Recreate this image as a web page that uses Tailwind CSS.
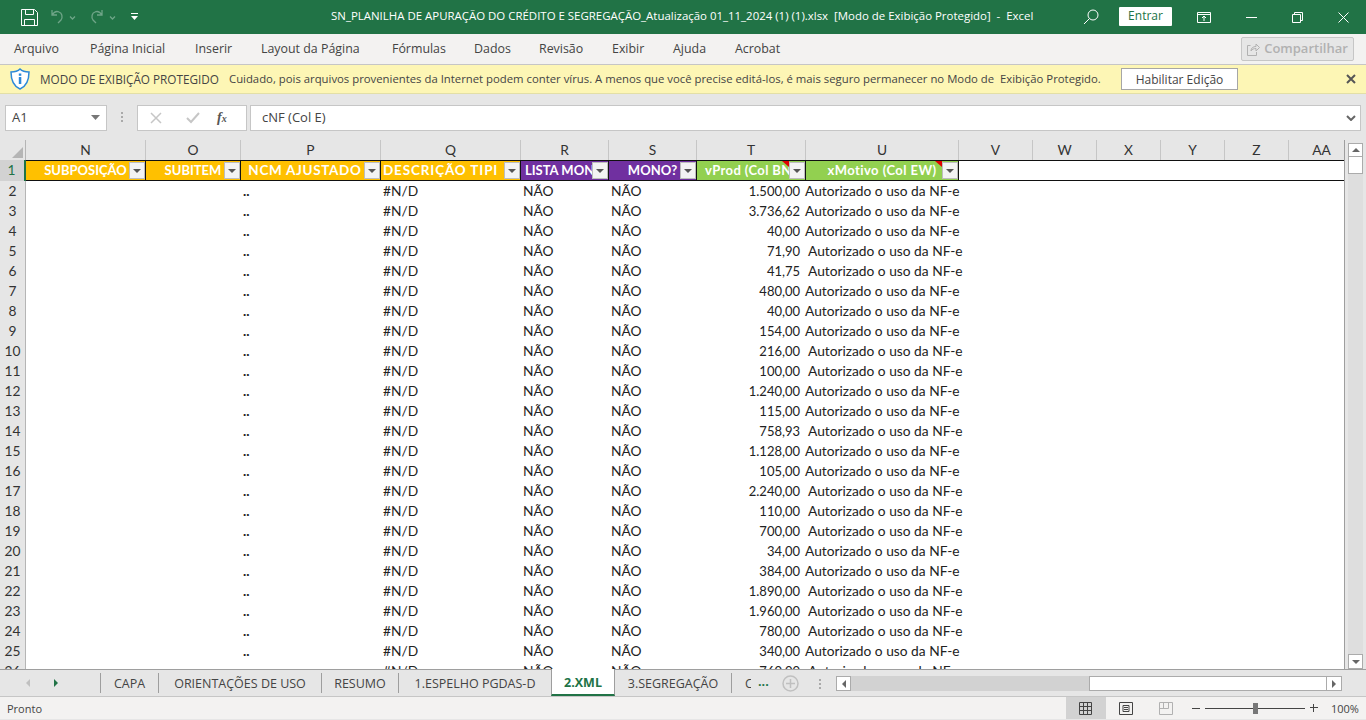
<!DOCTYPE html>
<html lang="pt-BR">
<head>
    <meta charset="UTF-8">
    <title>Excel - Modo de Exibição Protegido</title>
    <script src="https://cdn.jsdelivr.net/npm/@tailwindcss/browser@4"></script>
</head>
<body class="h-[720px] w-[1366px] overflow-hidden flex flex-col bg-[#e6e6e6] font-['Open_Sans','Noto_Sans',sans-serif] text-[#444]">

<!-- Title bar -->
<header class="h-[34px] shrink-0 bg-[#217346] text-white flex items-center text-[11.45px] relative">
    <div class="flex items-center pl-[21px] gap-[12px] w-[200px]">
        <svg width="17" height="17" viewBox="0 0 17 17" fill="none" stroke="white" stroke-width="1"><path d="M.5.5h13l3 3v13H.5zM4.5.5v5h8v-5M3.5 16.5v-6h10v6"/></svg>
        <svg width="28" height="16" viewBox="0 0 28 16" fill="none" stroke="#6fa588" stroke-width="1.3"><path d="M2 1v5h5M2 6c2-3 5-4 7-3 3 1 4 5 2 8l-3 3M20 7.500l2.500 2.500L25 7.500" /></svg>
        <svg width="28" height="16" viewBox="0 0 28 16" fill="none" stroke="#6fa588" stroke-width="1.3"><path d="M12 1v5H7M12 6c-2-3-5-4-7-3-3 1-4 5-2 8l3 3M20 7.500l2.500 2.500L25 7.500"/></svg>
        <svg width="9" height="8" viewBox="0 0 9 8" fill="white"><path d="M1 0h7v1H1zM1 3h7L4.500 7z"/></svg>
    </div>
    <span class="absolute left-[331px] top-[7px] whitespace-nowrap">SN_PLANILHA DE APURAÇÃO DO CRÉDITO E SEGREGAÇÃO_Atualização 01_11_2024 (1) (1).xlsx&nbsp; [Modo de Exibição Protegido]&nbsp; -&nbsp; Excel</span>
    <div class="ml-auto flex items-center">
        <svg class="mr-[20px]" width="16" height="16" viewBox="0 0 16 16" fill="none" stroke="white"><circle cx="10" cy="6" r="5"/><path d="M6.500 9.500L1 15"/></svg>
        <button class="w-[53px] h-[19px] bg-white text-[#217346] text-[12px] leading-[18px] rounded-[1px] mr-[25px] -mt-[2px]">Entrar</button>
        <svg class="mr-[17px]" width="14" height="11" viewBox="0 0 14 11" fill="none" stroke="white"><path d="M.5.500h13v10H.5zM.5 2.500h13M7 9V4.500M5 6l2-2 2 2"/></svg>
        <div class="w-[46px] flex justify-center"><div class="w-[11px] h-px bg-white"></div></div>
        <div class="w-[46px] flex justify-center"><svg width="11" height="11" viewBox="0 0 11 11" fill="none" stroke="white"><path d="M.5 2.500h8v8h-8zM2.500 2.500v-2h8v8h-2"/></svg></div>
        <div class="w-[46px] flex justify-center"><svg width="11" height="11" viewBox="0 0 11 11" stroke="white"><path d="M.5.500l10 10M10.500.500l-10 10"/></svg></div>
    </div>
</header>

<!-- Ribbon tabs -->
<nav class="h-[31px] shrink-0 bg-[#f3f2f1] border-b border-[#c6c6c6] flex items-center text-[12.4px] relative">
    <div class="flex pl-[14px] pt-[1px] whitespace-nowrap">
        <a class="w-[76px]">Arquivo</a><a class="w-[105px]">Página Inicial</a><a class="w-[66px]">Inserir</a><a class="w-[131px]">Layout da Página</a><a class="w-[82px]">Fórmulas</a><a class="w-[65px]">Dados</a><a class="w-[73px]">Revisão</a><a class="w-[61px]">Exibir</a><a class="w-[62px]">Ajuda</a><a>Acrobat</a>
    </div>
    <button class="ml-auto mr-[12px] w-[113px] h-[24px] border border-[#c6c6c6] bg-[#e6e6e6] rounded-[2px] text-[#b1b1b1] font-semibold text-[13px] flex items-center justify-center gap-[4px]">
        <svg width="13" height="13" viewBox="0 0 13 13" fill="none" stroke="#b1b1b1"><path d="M3.500 2.500H.5v10h9V9M4 8c0-3 2-4.500 5-4.500V1l3.500 3.500L9 8V5.500C7 5.500 5 6 4 8z"/></svg>
        Compartilhar
    </button>
</nav>

<!-- Protected view bar -->
<div class="h-[29px] shrink-0 bg-[#fdf6b5] border-b border-[#e3dfa6] flex items-center relative text-[#444]">
    <svg class="ml-[10px]" width="20" height="22" viewBox="0 0 20 22"><path d="M10 1c2 2 5 3 9 3 0 8-2 14-9 17C3 18 1 12 1 4c4 0 7-1 9-3z" fill="white" stroke="#2b88d8" stroke-width="1.500"/><rect x="8.800" y="9" width="2.500" height="7" fill="#2b88d8"/><rect x="8.800" y="5.500" width="2.500" height="2.300" fill="#2b88d8"/></svg>
    <span class="ml-[10px] text-[11.75px] whitespace-nowrap w-[189px] pt-[1px]">MODO DE EXIBIÇÃO PROTEGIDO</span>
    <span class="text-[11.33px] whitespace-nowrap pt-[1px]">Cuidado, pois arquivos provenientes da Internet podem conter vírus. A menos que você precise editá-los, é mais seguro permanecer no Modo de&nbsp; Exibição Protegido.</span>
    <button class="absolute left-[1121px] top-[3px] w-[117px] h-[22px] bg-white border border-[#a6a6a6] text-[12px] pt-[1px]">Habilitar Edição</button>
    <svg class="absolute left-[1346px] top-[9px]" width="10" height="10" viewBox="0 0 10 10" stroke="#555" stroke-width="2"><path d="M1 1l8 8M9 1l-8 8"/></svg>
</div>

<!-- Formula bar -->
<div class="h-[46px] shrink-0 flex items-center pl-[5px] pr-[5px] pt-[1px]">
    <div class="w-[102px] h-[26px] bg-white border border-[#c6c6c6] flex items-center justify-between pl-[6px] pr-[6px] text-[13px]">A1
        <svg width="9" height="5" viewBox="0 0 9 5" fill="#777"><path d="M0 0h9L4.500 5z"/></svg>
    </div>
    <div class="w-[30px] flex justify-center"><svg width="2" height="11" viewBox="0 0 2 11" fill="#aaa"><path d="M0 0h2v2H0zM0 4h2v2H0zM0 8h2v2H0z"/></svg></div>
    <div class="w-[110px] h-[26px] bg-white border border-[#c6c6c6] flex items-center">
        <svg class="ml-[12px]" width="12" height="12" viewBox="0 0 12 12" stroke="#c6c6c6" stroke-width="1.500"><path d="M1 1l10 10M11 1L1 11"/></svg>
        <svg class="ml-[24px]" width="14" height="12" viewBox="0 0 14 12" fill="none" stroke="#c6c6c6" stroke-width="2"><path d="M1 6l4 4 8-9"/></svg>
        <span class="ml-[17px] italic font-['Liberation_Serif',serif] text-[14px] font-bold text-[#555]">f<span class="text-[10px]">x</span></span>
    </div>
    <div class="ml-[3px] flex-1 h-[26px] bg-white border border-[#c6c6c6] flex items-center pl-[11px] pr-[4px] text-[13px] justify-between">cNF (Col E)
        <svg width="10" height="6" viewBox="0 0 10 6" fill="none" stroke="#666" stroke-width="2"><path d="M1 1l4 4 4-4"/></svg>
    </div>
</div>

<!-- Sheet -->
<main class="h-[530px] shrink-0 flex border-b border-[#9e9e9e] overflow-hidden">
    <div id="sheet" class="w-[1345px] shrink-0 bg-white overflow-hidden font-['Lato','Open_Sans',sans-serif] text-[13.75px] text-[#222] border-r border-[#9e9e9e]">
        <!-- Column headers -->
        <div class="grid grid-cols-[26px_120px_95px_140px_140px_88px_88px_109px_153px_74px_64px_64px_64px_64px_56px] h-5 bg-[#e6e6e6] text-[#333] text-center leading-5">
            <div class="relative border-r border-[#b5b5b5]"><div class="absolute right-[2px] bottom-[2px] w-0 h-0 border-l-[11px] border-l-transparent border-b-[11px] border-b-[#b5b5b5]"></div></div>
            <div class="border-r border-[#c6c6c6]">N</div><div class="border-r border-[#c6c6c6]">O</div><div class="border-r border-[#c6c6c6]">P</div><div class="border-r border-[#c6c6c6]">Q</div><div class="border-r border-[#c6c6c6]">R</div><div class="border-r border-[#c6c6c6]">S</div><div class="border-r border-[#c6c6c6]">T</div><div class="border-r border-[#c6c6c6]">U</div><div class="border-r border-[#c6c6c6]">V</div><div class="border-r border-[#c6c6c6]">W</div><div class="border-r border-[#c6c6c6]">X</div><div class="border-r border-[#c6c6c6]">Y</div><div class="border-r border-[#c6c6c6]">Z</div><div class="pl-[9px]">AA</div>
        </div>
        <!-- Row 1: filter headers -->
        <div class="grid grid-cols-[26px_120px_95px_140px_140px_88px_88px_109px_153px_1fr] h-[21px] font-bold text-[13px] text-white leading-[19px] border-b border-[#8a8a8a]">
            <div class="bg-[#d2d2d2] text-[#217346] text-center font-normal text-[13.75px] border-r-2 border-r-[#217346] pr-[1px]">1</div>
            <div class="relative bg-[#ffc000] border-y border-[#111] border-r text-center"><span class="block">SUBPOSIÇÃO</span></div>
            <div class="relative bg-[#ffc000] border-y border-[#111] border-r text-center">SUBITEM</div>
            <div class="relative bg-[#ffc000] border-y border-[#111] border-r text-center pr-[11px] text-[13.5px] tracking-[0.67px] whitespace-nowrap">NCM AJUSTADO</div>
            <div class="relative bg-[#ffc000] border-y border-[#111] border-r pl-[2px] text-[13.5px] tracking-[0.85px] whitespace-nowrap overflow-hidden">DESCRIÇÃO TIPI</div>
            <div class="relative bg-[#7030a0] border-y border-[#111] border-r pl-[4px] whitespace-nowrap overflow-hidden">LISTA MONO?</div>
            <div class="relative bg-[#7030a0] border-y border-[#111] border-r text-center">MONO?</div>
            <div class="relative bg-[#92d050] border-y border-[#111] border-r pl-[8px] tracking-[0.4px] whitespace-nowrap overflow-hidden">vProd (Col BN)</div>
            <div class="relative bg-[#92d050] border-y border-[#111] border-r text-center tracking-[0.45px]">xMotivo (Col EW)</div>
            <div class="border-y border-[#111] bg-white"></div>
        </div>
        <div id="rows"></div>
    </div>
    <!-- Vertical scrollbar -->
    <div class="w-[21px] shrink-0 flex flex-col items-center pt-[3px]">
        <div class="w-[15px] h-[14px] bg-white border border-[#ababab] flex items-center justify-center"><div class="w-0 h-0 border-x-[4px] border-x-transparent border-b-[4px] border-b-[#666]"></div></div>
        <div class="w-[15px] h-[17px] bg-white border border-[#ababab] border-t-0"></div>
        <div class="w-[15px] flex-1 bg-[#dedede]"></div>
        <div class="w-[15px] h-[15px] bg-white border border-[#ababab] flex items-center justify-center"><div class="w-0 h-0 border-x-[4px] border-x-transparent border-t-[4px] border-t-[#666]"></div></div>
    </div>
</main>

<!-- Sheet tabs -->
<div class="h-[27px] shrink-0 flex items-center border-b border-[#c6c6c6] text-[12.5px] text-[#444] relative">
    <div class="w-[100px] h-full flex items-center pl-[26px] gap-[24px] shrink-0">
        <div class="w-0 h-0 border-y-[4px] border-y-transparent border-r-[4px] border-r-[#c0c0c0]"></div>
        <div class="w-0 h-0 border-y-[4px] border-y-transparent border-l-[4px] border-l-[#217346]"></div>
    </div>
    <div class="flex h-[26px] items-stretch">
        <a class="w-[58px] flex items-center justify-center border-l border-[#9e9e9e] my-[3px] pt-[2px]">CAPA</a>
        <a class="w-[163px] flex items-center justify-center border-l border-[#9e9e9e] my-[3px] pt-[2px]">ORIENTAÇÕES DE USO</a>
        <a class="w-[77px] flex items-center justify-center border-l border-[#9e9e9e] my-[3px] pt-[2px]">RESUMO</a>
        <a class="w-[153px] flex items-center justify-center border-l border-[#9e9e9e] my-[3px] pt-[2px]">1.ESPELHO PGDAS-D</a>
        <a class="w-[64px] flex items-center justify-center bg-white font-bold text-[#217346] border-b-2 border-[#217346] border-x border-x-[#9e9e9e] -mt-px pt-[3px]">2.XML</a>
        <a class="w-[117px] flex items-center justify-center border-r border-[#9e9e9e] my-[3px] pt-[2px]">3.SEGREGAÇÃO</a>
        <a class="w-[19px] pl-[13px] overflow-hidden flex items-center pt-[2px]">C</a>
    </div>
    <span class="absolute left-[758px] top-[3px] font-bold text-[#217346]">...</span>
    <svg class="absolute left-[782px] top-[5px]" width="17" height="17" viewBox="0 0 17 17" fill="none" stroke="#c0c0c0" stroke-width="1.500"><circle cx="8.500" cy="8.500" r="7.500"/><path d="M8.500 4v9M4 8.500h9"/></svg>
    <svg class="absolute left-[819px] top-[9px]" width="2" height="11" viewBox="0 0 2 11" fill="#aaa"><path d="M0 0h2v2H0zM0 4h2v2H0zM0 8h2v2H0z"/></svg>
    <div class="absolute left-[836px] top-[6px] w-[506px] h-[15px] flex">
        <div class="w-[15px] bg-white border border-[#ababab] flex items-center justify-center"><div class="w-0 h-0 border-y-[4px] border-y-transparent border-r-[4px] border-r-[#666]"></div></div>
        <div class="w-[238px] bg-[#d2d2d2]"></div>
        <div class="flex-1 bg-white border border-[#ababab]"></div>
        <div class="w-[15px] bg-white border border-[#ababab] border-l-0 flex items-center justify-center"><div class="w-0 h-0 border-y-[4px] border-y-transparent border-l-[4px] border-l-[#666]"></div></div>
    </div>
</div>

<!-- Status bar -->
<footer class="h-[22px] shrink-0 bg-[#f3f2f1] flex items-center text-[11px] text-[#444] relative">
    <span class="pl-[7px] pt-[3px]">Pronto</span>
    <div class="ml-auto flex items-center h-full">
        <div class="w-[40px] h-full bg-[#d2d2d2] flex items-center justify-center pr-[2px]"><svg width="13" height="13" viewBox="0 0 13 13" fill="none" stroke="#444"><path d="M.5.500h12v12H.5zM.5 4.500h12M.5 8.500h12M4.500.500v12M8.500.500v12"/></svg></div>
        <div class="w-[40px] flex justify-center"><svg width="14" height="13" viewBox="0 0 14 13" fill="none" stroke="#444"><path d="M.5.500h13v12H.5zM4 3.500h6v6H4zM5 5.500h4M5 7.500h4"/></svg></div>
        <div class="w-[40px] flex justify-center"><svg width="14" height="13" viewBox="0 0 14 13" fill="none" stroke="#b1b1b1"><path d="M.5.500h13v12H.5zM4.500.500v6M.5 6.500h9M9.500.500v6"/></svg></div>
        <div class="flex items-center w-[145px] pl-[6px]">
            <div class="w-[8px] h-px bg-[#444]"></div>
            <div class="relative ml-[5px] w-[100px] h-px bg-[#444]"><div class="absolute left-[48px] -top-[5px] w-[5px] h-[11px] bg-[#777]"></div></div>
            <svg class="ml-[5px]" width="8" height="8" viewBox="0 0 8 8" stroke="#444"><path d="M0 3.500h8M3.500 0v8"/></svg>
        </div>
        <span class="w-[35px] pt-[3px] whitespace-nowrap">100%</span>
    </div>
</footer>

<script>
    // Coluna T: valor, U: deslocamento do texto de xMotivo
    const data = [
        [2, "1.500,00", 0], [3, "3.736,62", 0], [4, "40,00", 0], [5, "71,90", 1], [6, "41,75", 1],
        [7, "480,00", 0], [8, "40,00", 0], [9, "154,00", 0], [10, "216,00", 1], [11, "100,00", 1],
        [12, "1.240,00", 0], [13, "115,00", 0], [14, "758,93", 1], [15, "1.128,00", 0], [16, "105,00", 0],
        [17, "2.240,00", 1], [18, "110,00", 1], [19, "700,00", 1], [20, "34,00", 0], [21, "384,00", 0],
        [22, "1.890,00", 1], [23, "1.960,00", 1], [24, "780,00", 1], [25, "340,00", 0], [26, "760,00", 1],
    ];

    document.getElementById("rows").innerHTML = data.map(([row, value, shifted]) => `
        <div class="grid grid-cols-[26px_120px_95px_140px_140px_88px_88px_109px_153px_1fr] h-5 leading-5 whitespace-nowrap">
            <div class="bg-[#e6e6e6] text-[#333] text-center border-r border-[#b5b5b5]">${row}</div>
            <div></div>
            <div></div>
            <div class="pl-[2px] font-bold">..</div>
            <div class="pl-[2px]">#N/D</div>
            <div class="pl-[2px]">NÃO</div>
            <div class="pl-[2px]">NÃO</div>
            <div class="text-right pr-[6px] text-[13px]">${value}</div>
            <div class="${shifted ? "pl-[2px]" : "-ml-px"}">Autorizado o uso da NF-e</div>
            <div></div>
        </div>`).join("");

    // Botões de filtro do cabeçalho
    const headerCells = document.querySelectorAll("#sheet .relative.border-y");
    headerCells.forEach((cell) => {
        const btn = document.createElement("div");
        btn.className = "absolute right-0 top-px w-[16px] h-[17px] bg-[#f3f3f3] border border-[#bdbdbd] flex items-center justify-center";
        btn.innerHTML = '<div class="w-0 h-0 border-x-[4px] border-x-transparent border-t-[4px] border-t-[#555]"></div>';
        cell.appendChild(btn);
    });
    headerCells.forEach((cell) => {
        if (cell.textContent.startsWith("vProd") || cell.textContent.startsWith("xMotivo")) {
            const mark = document.createElement("div");
            mark.className = "absolute right-[16px] top-0 w-0 h-0 border-l-[7px] border-l-transparent border-t-[6px] border-t-[#e00000]";
            cell.appendChild(mark);
        }
    });
</script>
</body>
</html>
